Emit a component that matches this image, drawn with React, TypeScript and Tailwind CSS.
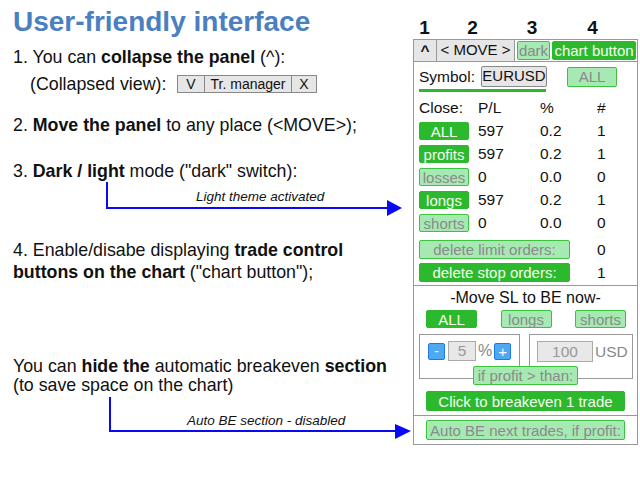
import React from 'react';

type BtnProps = { label: string; on?: boolean; className?: string };

function Btn({ label, on, className = '' }: BtnProps) {
  return (
    <div
      className={`flex items-center justify-center rounded-[2px] border text-[15px] leading-none whitespace-nowrap ${
        on ? 'bg-[#2db92d] border-[#2db92d] text-[#f6fff0]' : 'bg-[#a6e9b3] border-[#3cc23c] text-[#8a8a8a]'
      } ${className}`}
    >
      {label}
    </div>
  );
}

const rows: [string, boolean, string, string, string][] = [
  ['ALL', true, '597', '0.2', '1'],
  ['profits', true, '597', '0.2', '1'],
  ['losses', false, '0', '0.0', '0'],
  ['longs', true, '597', '0.2', '1'],
  ['shorts', false, '0', '0.0', '0'],
];

export default function App() {
  return (
    <div className="flex h-[480px] w-[640px] overflow-hidden bg-white font-['Liberation_Sans',Arial,sans-serif] text-[#111]">
      {/* Left: explanations */}
      <div className="w-[413px] shrink-0 text-[17.8px]">
        <h1 className="pl-[13px] pt-[6px] text-[28px] font-bold leading-[32px] text-[#4a7fc1]">
          User-friendly interface
        </h1>
        <p className="mt-[8px] pl-[13px] leading-[22px]">
          1. You can <b>collapse the panel</b> (^):
        </p>
        <div className="mt-[5px] flex h-[22px] items-center pl-[30px]">
          <span className="w-[147px]">(Collapsed view):</span>
          <div className="flex h-[18px] border border-[#888] bg-[#e6e6e6] text-[14px] leading-[16px]">
            <span className="w-[26px] text-center">V</span>
            <span className="w-[88px] border-x border-[#888] text-center">Tr. manager</span>
            <span className="w-[24px] text-center">X</span>
          </div>
        </div>
        <p className="mt-[19px] pl-[13px] leading-[22px]">
          2. <b>Move the panel</b> to any place (&lt;MOVE&gt;);
        </p>
        <p className="mt-[24px] pl-[13px] leading-[22px]">
          3. <b>Dark / light</b> mode ("dark" switch):
        </p>
        <div className="relative h-[36px]">
          <svg className="absolute left-0 top-0" width="413" height="36">
            <path d="M107 0 V26 H390" fill="none" stroke="#0a0af0" strokeWidth="2" />
            <polygon points="387,18 402,26 387,34" fill="#0a0af0" />
          </svg>
          <div className="relative pl-[196px] pt-[7px] text-[13.5px] italic leading-[16px]">Light theme activated</div>
        </div>
        <p className="mt-[21px] whitespace-nowrap pl-[13px] leading-[22px]">
          4. Enable/disabe displaying <b>trade control</b>
          <br />
          <b>buttons on the chart</b> ("chart button");
        </p>
        <p className="mt-[74px] whitespace-nowrap pl-[13px] leading-[19px]">
          You can <b>hide the</b> automatic breakeven <b>section</b>
          <br />
          (to save space on the chart)
        </p>
        <div className="relative h-[50px]">
          <svg className="absolute left-0 top-0" width="413" height="50">
            <path d="M110 2 V36 H398" fill="none" stroke="#0a0af0" strokeWidth="2" />
            <polygon points="395,29 411,36 395,44" fill="#0a0af0" />
          </svg>
          <div className="relative pl-[187px] pt-[18px] text-[13.5px] italic leading-[16px]">
            Auto BE section - disabled
          </div>
        </div>
      </div>

      {/* Right: panel */}
      <div className="w-[225px] shrink-0">
        <div className="mt-[17px] flex h-[22px] text-[19px] font-bold leading-[22px]">
          <span className="w-[23px] text-center">1</span>
          <span className="w-[73px] text-center">2</span>
          <span className="w-[46px] text-center">3</span>
          <span className="w-[75px] text-center">4</span>
        </div>
        <div className="border border-[#999] text-[15.5px]">
          {/* Header */}
          <div className="flex h-[22px] items-center border-b border-[#999]">
            <div className="flex h-full w-[23px] items-center justify-center border-r border-[#999] bg-[#e6e6e6] font-bold">
              ^
            </div>
            <div className="flex h-full w-[78px] items-center justify-center border-r border-[#999] bg-[#e6e6e6] text-[15px]">
              &lt; MOVE &gt;
            </div>
            <Btn label="dark" className="ml-[2px] h-[19px] w-[33px]" />
            <Btn label="chart button" on className="ml-[2px] h-[19px] w-[84px]" />
          </div>

          {/* Close section */}
          <div className="border-b border-[#999] px-[5px] pb-[3px] pt-[4px]">
            <div className="flex h-[21px] items-center">
              <span className="w-[62px]">Symbol:</span>
              <div className="flex h-[21px] w-[66px] items-center justify-center rounded-[2px] border border-[#888] bg-[#e6e6e6] text-[15px]">
                EURUSD
              </div>
              <Btn label="ALL" className="ml-[20px] h-[20px] w-[50px]" />
            </div>
            <div className="mt-[2px] h-[3px] w-[127px] bg-[#2db92d]" />
            <div className="mt-[7px] flex h-[18px] items-center">
              <span className="w-[59px]">Close:</span>
              <span className="w-[62px]">P/L</span>
              <span className="w-[57px]">%</span>
              <span>#</span>
            </div>
            <div className="mt-[5px] flex flex-col gap-[5px]">
              {rows.map(([name, on, pl, pct, n]) => (
                <div key={name} className="flex h-[18px] items-center">
                  <Btn label={name} on={on} className="h-[18px] w-[50px]" />
                  <span className="ml-[9px] w-[62px]">{pl}</span>
                  <span className="w-[57px]">{pct}</span>
                  <span>{n}</span>
                </div>
              ))}
            </div>
            <div className="mt-[8px] flex flex-col gap-[4px]">
              <div className="flex h-[19px] items-center">
                <Btn label="delete limit orders:" className="h-[19px] w-[151px]" />
                <span className="ml-[27px]">0</span>
              </div>
              <div className="flex h-[19px] items-center">
                <Btn label="delete stop orders:" on className="h-[19px] w-[151px]" />
                <span className="ml-[27px]">1</span>
              </div>
            </div>
          </div>

          {/* Move SL to BE */}
          <div className="border-b border-[#999] pb-[4px] pt-[3px]">
            <div className="h-[18px] text-center text-[16px] leading-[18px]">-Move SL to BE now-</div>
            <div className="mt-[3px] flex justify-between pl-[12px] pr-[11px]">
              <Btn label="ALL" on className="h-[18px] w-[51px]" />
              <Btn label="longs" className="h-[18px] w-[51px]" />
              <Btn label="shorts" className="h-[18px] w-[51px]" />
            </div>
            <div className="mt-[6px] flex gap-[9px] pl-[5px]">
              <div className="h-[45px] w-[101px] border border-[#999] pl-[8px] pt-[6px]">
                <div className="flex h-[20px] items-center">
                  <div className="flex h-[17px] w-[17px] items-center justify-center rounded-[2px] border border-[#1a7ae0] bg-[#4fa8f2] text-[14px] leading-none text-white">
                    -
                  </div>
                  <div className="ml-[3px] flex h-[20px] w-[28px] items-center justify-center border border-[#aaa] bg-[#e8e8e8] text-[#999]">
                    5
                  </div>
                  <span className="ml-[2px] text-[16px] text-[#888]">%</span>
                  <div className="ml-[2px] flex h-[17px] w-[17px] items-center justify-center rounded-[2px] border border-[#1a7ae0] bg-[#4fa8f2] text-[15px] leading-none text-white">
                    +
                  </div>
                </div>
              </div>
              <div className="h-[45px] w-[104px] border border-[#999] pl-[7px] pt-[6px]">
                <div className="flex h-[21px] items-center">
                  <div className="flex h-[21px] w-[56px] items-center justify-center border border-[#aaa] bg-[#e8e8e8] text-[#999]">
                    100
                  </div>
                  <span className="ml-[2px] text-[#888]">USD</span>
                </div>
              </div>
            </div>
            <Btn label="if profit > than:" className="relative mx-auto -mt-[13px] h-[19px] w-[105px]" />
            <Btn label="Click to breakeven 1 trade" on className="mx-auto mt-[6px] h-[20px] w-[199px]" />
          </div>

          {/* Auto BE */}
          <div className="pb-[4px] pt-[4px]">
            <Btn label="Auto BE next trades, if profit:" className="mx-auto h-[20px] w-[199px]" />
          </div>
        </div>
      </div>
    </div>
  );
}
